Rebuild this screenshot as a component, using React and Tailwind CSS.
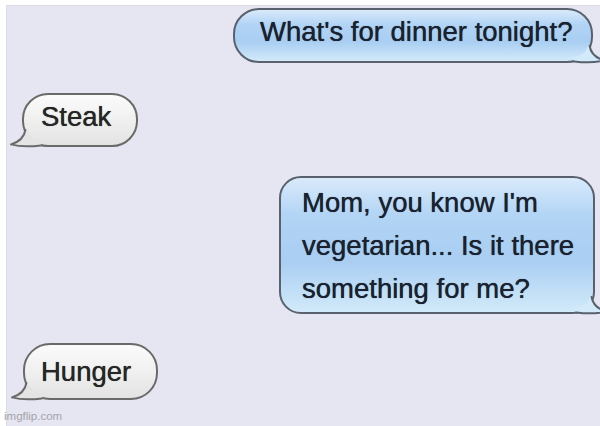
import React from "react";

function Tail({ side, fill, stroke }) {
  const pos =
    side === "left"
      ? "left-[-16px] bottom-[-4px]"
      : "right-[-16px] bottom-[-4px] -scale-x-100";
  return (
    <svg
      className={`absolute ${pos} w-[40px] h-[30px] overflow-visible`}
      viewBox="0 0 40 30"
    >
      <path
        d="M17.4 11 C16.2 18.5 11.5 22.8 3 25.4 C11 27.6 21 27.9 33 26.4 L34 22.5 C26 21 20 17 19.5 11 Z"
        fill={fill}
      />
      <path
        d="M17.4 11 C16.2 18.5 11.5 22.8 3 25.4 C11 27.6 21 27.9 33 26.4"
        fill="none"
        stroke={stroke}
        strokeWidth="2"
        strokeLinejoin="round"
        strokeLinecap="round"
      />
    </svg>
  );
}

export default function App() {
  const blue =
    "bg-[linear-gradient(to_bottom,#d9eafb_0%,#b2d4f5_28%,#a9cef2_62%,#d2eaf9_100%)] border-2 border-[#59616e] text-[#1a2130] [text-shadow:0_0_0.7px_#1a2130]";
  const gray =
    "bg-[linear-gradient(to_bottom,#fbfbfb_0%,#f0f0f0_50%,#e3e3e3_100%)] border-2 border-[#6a6a6a] text-[#262626] [text-shadow:0_0_0.7px_#262626]";
  return (
    <div className="w-[600px] h-[426px] bg-white pt-[5px] pl-[6px] overflow-hidden relative font-['Liberation_Sans',Arial,sans-serif]">
      <div className="h-full bg-[#e6e6f3] flex flex-col border-l border-t border-[#dcdce6]">
        <div
          className={`relative self-end mr-[7px] mt-[2px] w-[360px] rounded-[26px] pl-[25px] pt-[0px] pb-[8px] text-[27.5px] leading-[43px] ${blue}`}
        >
          What's for dinner tonight?
          <Tail side="right" fill="#d2eaf9" stroke="#59616e" />
        </div>

        <div
          className={`relative self-start ml-[15px] mt-[30px] w-[116px] rounded-[26px] pl-[17px] pt-[0px] pb-[7px] text-[27.5px] leading-[43px] ${gray}`}
        >
          Steak
          <Tail side="left" fill="#e4e4e4" stroke="#6a6a6a" />
        </div>

        <div
          className={`relative self-end mr-[5px] mt-[29px] w-[316px] rounded-[22px] pl-[21px] pt-[3px] pb-[2px] text-[27.5px] leading-[43px] ${blue}`}
        >
          Mom, you know I'm
          <br />
          vegetarian... Is it there
          <br />
          something for me?
          <Tail side="right" fill="#d2eaf9" stroke="#59616e" />
        </div>

        <div
          className={`relative self-start ml-[16px] mt-[29px] w-[135px] rounded-[27px] pl-[16px] pt-[5px] pb-[5px] text-[27.5px] leading-[43px] ${gray}`}
        >
          Hunger
          <Tail side="left" fill="#e4e4e4" stroke="#6a6a6a" />
        </div>
      </div>
      <div className="absolute left-[4px] bottom-[4px] text-[11.5px] leading-none text-[#a3a3a8]">
        imgflip.com
      </div>
    </div>
  );
}
